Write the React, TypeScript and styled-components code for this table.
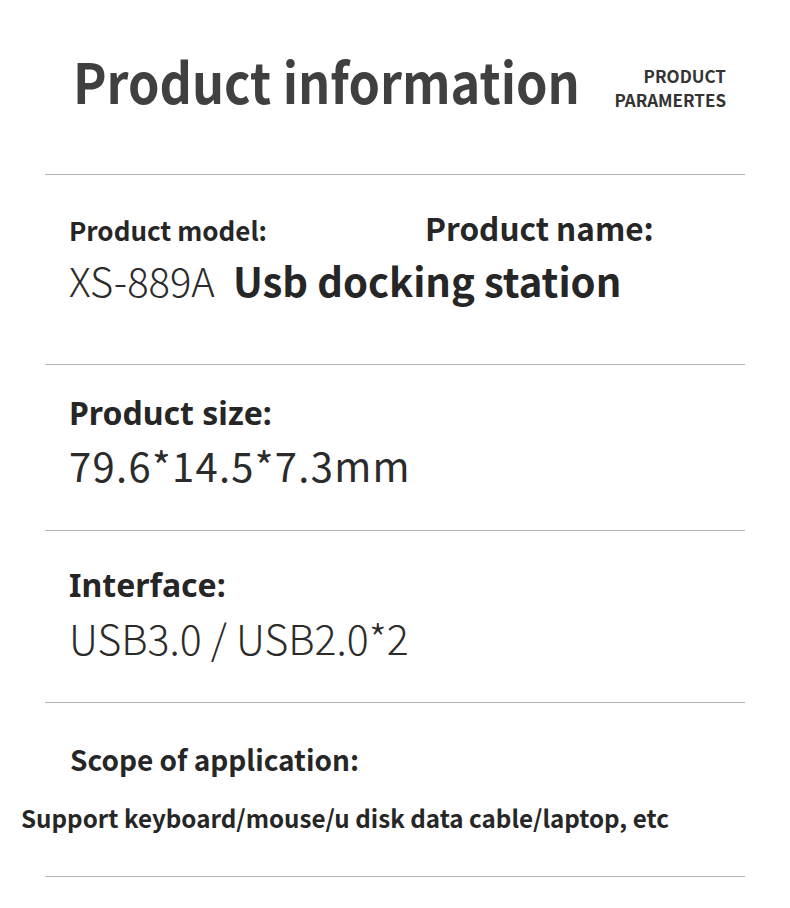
import React from 'react'
import styled, { createGlobalStyle } from 'styled-components'

const GlobalStyle = createGlobalStyle`
  body {
    margin: 0;
    background: #fff;
    font-family: "Noto Sans CJK SC", "Noto Sans", sans-serif;
    color: #2b2b2b;
  }
`

type Row = {
  label: string
  value: string
  valueSize: number
  spacing: number
  weight: number
  top: number
  height: number
}

const rows: Row[] = [
  { label: 'Product size:', value: '79.6*14.5*7.3mm', valueSize: 40, spacing: 1.3, weight: 400, top: 28, height: 166 },
  { label: 'Interface:', value: 'USB3.0 / USB2.0*2', valueSize: 41, spacing: 0, weight: 300, top: 34, height: 172 },
]

export default function App() {
  return (
    <>
      <GlobalStyle />
      <Page>
        <Header>
          <Title>Product information</Title>
          <Sub>
            PRODUCT
            <br />
            PARAMERTES
          </Sub>
        </Header>
        <Section $height={190} $top={34}>
          <LabelRow>
            <SmallLabel>Product model:</SmallLabel>
            <NameLabel>Product name:</NameLabel>
          </LabelRow>
          <ValueRow>
            <Value $size={40} $spacing={0} $weight={300}>
              XS-889A
            </Value>
            <Strong>Usb docking station</Strong>
          </ValueRow>
        </Section>
        {rows.map((r) => (
          <Section key={r.label} $height={r.height} $top={r.top}>
            <Label>{r.label}</Label>
            <Value $size={r.valueSize} $spacing={r.spacing} $weight={r.weight}>
              {r.value}
            </Value>
          </Section>
        ))}
        <Section $height={174} $top={38}>
          <Scope>Scope of application:</Scope>
          <Support>Support keyboard/mouse/u disk data cable/laptop, etc</Support>
        </Section>
      </Page>
    </>
  )
}

const Page = styled.div`
  width: 790px;
  height: 908px;
  overflow: hidden;
`

const Header = styled.div`
  margin: 0 45px;
  height: 175px;
  box-sizing: border-box;
  border-bottom: 1px solid #b4b4b4;
  display: flex;
  align-items: flex-start;
  padding: 38px 19px 0 28px;
`

const Title = styled.h1`
  margin: 0;
  width: 510px;
  font-size: 56px;
  line-height: 84px;
  font-weight: 700;
  color: #404040;
  white-space: nowrap;
  transform: scaleX(0.9);
  transform-origin: left center;
`

const Sub = styled.div`
  margin: 26px 0 0 auto;
  text-align: right;
  font-size: 17px;
  line-height: 24px;
  font-weight: 700;
  color: #333;
`

const Section = styled.div<{ $height: number; $top: number }>`
  margin: 0 45px;
  height: ${(p) => p.$height}px;
  box-sizing: border-box;
  border-bottom: 1px solid #b4b4b4;
  padding: ${(p) => p.$top}px 0 0 24px;
  display: flex;
  flex-direction: column;
`

const LabelRow = styled.div`
  display: flex;
  align-items: baseline;
  height: 36px;
`

const SmallLabel = styled.div`
  font-size: 26px;
  line-height: 36px;
  font-weight: 700;
  color: #262626;
`

const NameLabel = styled.div`
  margin-left: 158px;
  font-size: 31.5px;
  line-height: 36px;
  font-weight: 700;
  color: #262626;
`

const Label = styled.div`
  font-family: "Noto Sans", sans-serif;
  font-size: 32px;
  line-height: 40px;
  font-weight: 700;
  color: #262626;
`

const ValueRow = styled.div`
  display: flex;
  align-items: baseline;
  gap: 18px;
  margin-top: 9px;
  line-height: 52px;
`

const Value = styled.div<{ $size: number; $spacing: number; $weight: number }>`
  margin-top: 6px;
  font-size: ${(p) => p.$size}px;
  letter-spacing: ${(p) => p.$spacing}px;
  line-height: 52px;
  font-weight: ${(p) => p.$weight};
  color: #2b2b2b;
  white-space: nowrap;
  ${ValueRow} & {
    margin-top: 0;
  }
`

const Strong = styled.div`
  font-size: 40px;
  line-height: 52px;
  font-weight: 700;
  color: #262626;
`

const Scope = styled.div`
  font-size: 28px;
  line-height: 36px;
  font-weight: 700;
  color: #262626;
  margin-left: 1px;
`

const Support = styled.div`
  margin: 25px 0 0 -48px;
  font-size: 24.2px;
  line-height: 32px;
  font-weight: 700;
  color: #262626;
  white-space: nowrap;
`
